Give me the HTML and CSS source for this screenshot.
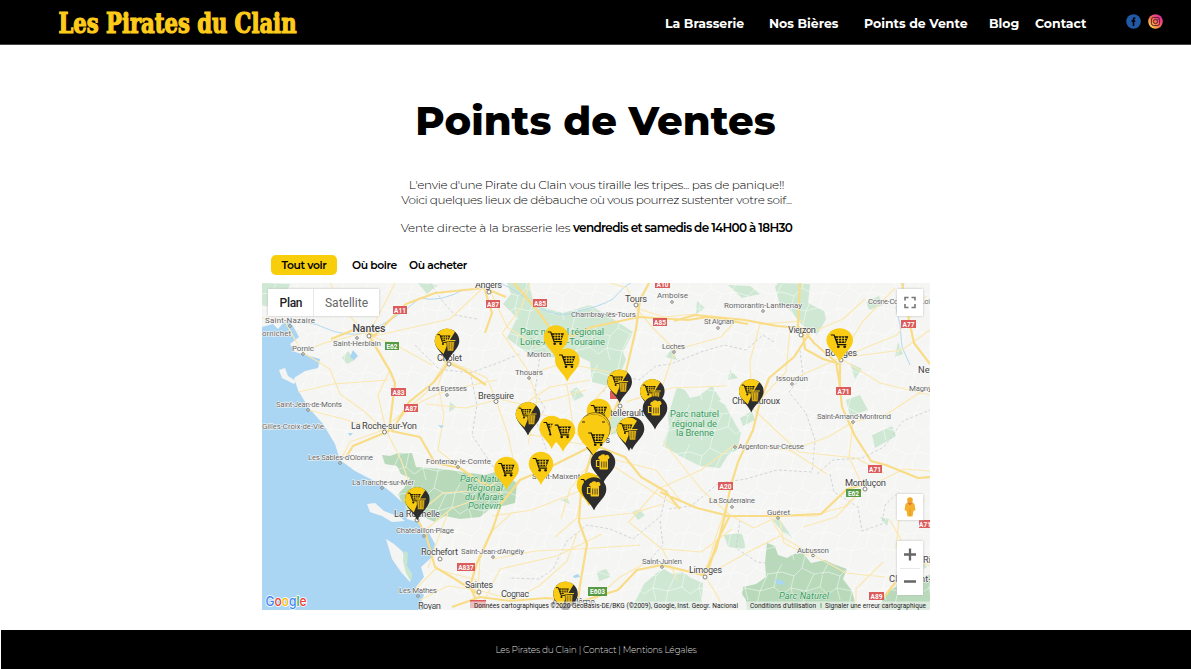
FILE: index.html
```html
<!DOCTYPE html>
<html lang="fr">
<head>
<meta charset="utf-8">
<title>Les Pirates du Clain – Points de Vente</title>
<link rel="stylesheet" href="styles.css">
</head>
<body>
<header class="header">
  <svg class="logo" width="242" height="34" viewBox="0 0 242 34"><text x="1.500" y="25.500" textLength="238" lengthAdjust="spacingAndGlyphs">Les Pirates du Clain</text></svg>
  <nav class="nav">
    <a>La Brasserie</a><a>Nos Bières</a><a>Points de Vente</a><a>Blog</a><a>Contact</a>
  </nav>
  <div class="social">
    <svg width="15" height="15" viewBox="0 0 15 15"><circle cx="7.500" cy="7.500" r="7.300" fill="#2059a6"/><path d="M6.700 12V8H5.500V6.300h1.200V5.200C6.700 3.800 7.400 3.100 9.300 3.300v1.500c-.8 0-1 .1-1 .7v.8h1L9.100 8h-.8v4z" fill="#000"/></svg>
    <svg width="15" height="15" viewBox="0 0 15 15"><defs><linearGradient id="ig" x1="0" y1="1" x2="1" y2="0"><stop offset=".1" stop-color="#ffdc50"/><stop offset=".45" stop-color="#f9754d"/><stop offset=".75" stop-color="#ed388d"/><stop offset="1" stop-color="#a536c2"/></linearGradient></defs><circle cx="7.500" cy="7.500" r="7.300" fill="url(#ig)"/><g fill="none" stroke="#341222" stroke-width=".8"><rect x="3.400" y="3.400" width="8.200" height="8.200" rx="2.300"/><circle cx="7.500" cy="7.500" r="2.100"/></g><circle cx="9.900" cy="5.100" r=".55" fill="#341222"/></svg>
  </div>
</header>
<main class="main">
  <h1 class="title">Points de Ventes</h1>
  <div class="intro">
    <p class="l1">L'envie d'une Pirate du Clain vous tiraille les tripes... pas de panique!!</p>
    <p class="l2">Voici quelques lieux de débauche où vous pourrez sustenter votre soif...</p>
    <p class="l3">Vente directe à la brasserie les <b>vendredis et samedis de 14H00 à 18H30</b></p>
  </div>
  <div class="filters"><span class="filter active">Tout voir</span><span class="filter f2">Où boire</span><span class="filter f3">Où acheter</span></div>
  <section class="map">
    <svg class="canvas" width="668" height="327" viewBox="262 283 668 327">
      <defs>
        <pattern id="veins" width="46" height="40" patternUnits="userSpaceOnUse"><path d="M0 12 12 16 20 8 32 14 46 12M12 16 9 28 0 34M20 8 22 0M9 28 24 31 32 14M24 31 22 40M24 31 38 27 46 34M38 27 41 13M41 13 46 4M9 28 12 40" fill="none" stroke="#fff" stroke-width=".8" opacity=".6"/></pattern>
        <path id="drop" d="M0 21C-3 13-12.300 8-12.300 0A12.300 12.300 0 0 1 12.300 0C12.300 8 3 13 0 21Z"/>
        <g id="cart"><path d="M-8.200-5.500h3l3.300 9.700h8" fill="none" stroke="#191704" stroke-width="1.200"/><path d="M-4.700-4.300H8L5.400 2.500H-2.400Z" fill="#191704"/><path d="M-3.400-2.200h10M-2.500.3h8.300M-1-4v6M1.800-4v6M4.500-4v6" stroke="#f8ca17" stroke-width=".9"/><circle cx="-1.300" cy="6.200" r="1.300" fill="#191704"/><circle cx="4.600" cy="6.200" r="1.300" fill="#191704"/></g>
        <g id="mug"><rect x="-4.500" y="-4" width="8.500" height="11" rx="1"/><path d="M-5.500-3.500a2.200 2.200 0 0 1 1.800-3.200 3.200 3.200 0 0 1 5.200-.3 2.300 2.300 0 0 1 3.200 3.500z"/><path d="M-2.300-1v6M0-1v6M2.200-1v6" stroke="#2e2b24" stroke-width=".8"/></g>
        <g id="pc"><use href="#drop" fill="#f9cb12"/><use href="#cart"/></g>
        <g id="pm"><use href="#drop" fill="#2d2d2d"/><path d="M-3.500-2h-3v6h3" fill="none" stroke="#f8ca17" stroke-width="1.200"/><use href="#mug" x="1" fill="#f8ca17"/></g>
        <g id="pb"><use href="#drop" fill="#2d2d2d"/><path d="M-3.500 13C-7 9-12.300 6-12.300 0A12.300 12.300 0 0 1 8-9.300L1 2Z" fill="#f9cb12"/><use href="#cart" transform="translate(-3 -2) scale(.8)"/><g transform="translate(3.500 4.500)"><path d="M-4-4h8l-1 9.500h-6z" fill="#d8ae18" stroke="#3c331a" stroke-width=".5"/><path d="M-5-5H5" stroke="#f8ca17" stroke-width="1"/><path d="M-1.300-3v7M1.300-3v7" stroke="#6b5717" stroke-width=".6"/></g></g>
      </defs>
      <rect x="262" y="283" width="668" height="327" fill="#f5f5f4"/>
      <g fill="#cfe8d4">
        <path d="M507 283h22l5 22 29 8 27-8 20 12 23 15-10 20 3 8-6 14-12 12-16-4-2-20-14-7-16 3-30-3-23-17 10-20-14-14 8-10z"/>
        <path d="m677 387 8 3 5 8 20-5 6 6 9 6 12 22 4 6-4 17-9 5-8 13-20-2-20-10-17-10 6-20-1-10z"/>
        <path d="m778 283 32 1-2 19 16 8 2 8-9 16-15-10-12-15-10-5-5-18z"/>
        <path d="m658 572 6-3 8 5 11-2 8 6 12 5-2 27h-71l8-14 6-12z"/>
        <path d="m262 283 28 1-5 12 12 8-20 6-15-5z"/>
        <path d="m700 395 12-9 9 14-17 4zM740 418l12-7 3 9-12 6zM846 400l14-5 8 15-18 6zM872 435l20-9 4 10-21 12zM724 535l18-2 4 16-18-2zM772 519l8 1 12 17-10-5zM570 391l7-4 7 9-10 5zM866 302l13-6 4 9-14 5zM850 363l12 6-7 10zM728 285l22 1 10 8-18 4zM697 301l8 7-9 6zM730 370l8 8-10 2zM597 572l9-3 5 8-12 4zM632 512l8-3 5 6-7 5zM342 358l6-7 7 9-8 4zM418 283l20 2-11 9zM450 402l6 5-7 5zM665 357l7-8 5 11zM880 517l9 2-2 7zM898 342l5 12-8 3zM914 560l8-3 5 10-8 5zM560 500l7-2 3 6zM610 414l18 4-5 13-12 4z"/>
      </g>
      <g fill="#b8dabb"><path d="m382 455 8 1 8-3 14 0 4 14 26 2 43 6 14-4 18 12-2 20-25 6-10 8-20 2-15-3-10 6-30-13-7-15 6-6 6-10-9-4-4-8-12-2z"/><path d="m767 543 8 3 3 9 9 3 7-4 9-1 8 10 14-3 8 4 14 5-4 10 9 12 5 19H747l-1-10-4-6 1-7 13-3 10-7-1-14z"/><path d="m877 610 10-18 12-7 8 4 23-15v36z"/></g>
      <path d="M262 283h668v327H262z" fill="url(#veins)"/>
      <path d="m262 327 11-3 5 5 8-9 7 6 6 11-9 7 5 8 11 3 14 4-2 9-13 3-11 7 4 12 10 17 15 17 12 20 5 16 15 11 27 14 10 8 13 12 2 14 10 3 12 11 6 11-3 13-11 10 3 10-8 10 8 8-3 7 5 14H262z" fill="#aad6f3"/>
      <g fill="#f4f5f3"><path d="m367 504 8-1 9 8 16 6 5 4-13 1-10-6-12-4z"/><path d="m386 539 8 5 9 8 3 13 6 9-2 8-9-10-9-13z"/><path d="m279 370 6-2 3 8 8 5-2 3-12-6z"/></g>
      <path d="M404 551l4 2-1 13 5 8-1 8-5-9-3-12z" fill="#c8e5cf"/>
      <path d="M288 323q22-3 37 5 20 9 40 5 30-13 55-35 20 5 45-9M500 283q18 8 36 23 25 14 42 5 21-4 35-12 12-14 18-16M904 283l-8 25 4 17 2 22 8 18" fill="none" stroke="#b3daf0" stroke-width="1"/>
      <g fill="none" stroke="#c9cbce" stroke-width=".8" stroke-dasharray="3 2">
        <path d="M430 283l14 20 11 12 22 4M415 345l24 24 31 4 25-9 25-10M470 372l7 33-5 30 12 18 17 25-6 12M540 354l-5 38 10 16-8 15 9 26M603 392l13-18 23 6 17-14 15-2 30-12 23-7 22 5 17-15 11 7M800 350l3 25-14 17 17 21 9 27-3 32-35-2-31 9-27 4-28 23-22 3M817 474l16-14 29-2 22-11 19-26 27-11M830 474l4 18 24 15 4 24 20-7 3-19 14-13M667 490l-6 26-28 23-23-10-23-4-20 16-14 28-14 10-30-1M660 521l3 24-18 20M740 520l-4 28 21 14 52 7 19 8"/>
      </g>
      <g fill="none" stroke="#fbe8b0" stroke-width="1.200" stroke-linejoin="round">
        <path d="M262 318l22 2 18 32 22-9 40-10M302 352l28 17 10 25 25 18 20 19M298 392l35-8 55-4M308 410l32 8 45 13M340 461l10-19 22-8 15-5M330 283l17 30 20 22 27 9 38 21M395 283l-10 20-17 32M370 337l80-18 36-34M386 430l-8-35 12-25-18-32M390 430l20-23 30-14 32-8 25-5M386 430l15 30 7 20M447 360l-21 33-33 28M447 360l40 18 8 20 30 7 29-6 32-9M447 360l-9 25 6 30-6 35 21 17M496 400l-30 8-40-4M496 400l12 35 6 28M416 515l27-22 40-3 34-20M422 533l30-25 41-14M428 568l12-35 8-20M415 590l20-21 42 11M420 600l28-14 30 4M478 590l2-31 13-29 18-16M478 590l35 10 26-14 28-25 10-28M493 559l42-8 45-2 60-4M530 283l-9 25-19 25 25 36 10 30-9 45M529 374l32-10 23 3 35 7M490 290l17 37 31 20M636 308l28 9 32-3 18 7M636 308l-9-20-17-5M636 308l17 20 22 22 46-13 17-19M675 350l-14 40-35 12M626 402l46-14 55-2M752 408l-2-47 10-37 43-3M752 408l34-36 4-43M752 408l47 44 57 6 28 15M734 445l56 5 37 24M734 445l-33 25-43 19-30 34M803 336l40-17 22-20M840 358l57-23 29-39M840 358l23-37 32-33M840 358l62-8 28-20M840 358l40 25 50 12M840 358l-54 24M853 422l34-8 43-28M853 422l-25 15-39 14M853 422l-4 35 13 28M862 490l-18 17-22 6M862 490l-26 27-33 10M876 483l28-14 26 2M730 515l-29-26-24-30-14-18M730 515l24 13 25-12 40 0M779 516l5 27 25 13M813 555l-31-18-14-23M813 555l33 18 39 4M732 529l-31 23-38-3M705 576l-30-7-29-6M705 576l10-37 13-37M705 576l47-26 28-14M705 576l13 21 5 13M646 563l-26 14-27 24M596 455l-26 34-9 30M596 455l48 31 36 22M596 455l60 15 24 30M594 446l35-28-10-16M594 446l-38-27-29-10M594 446l-5-40 20-22M582 490l-50 20-40 6M582 490l-5 28-22 19M579 519l54-6 30-9M630 523l33 27 15 31M594 446l-31-5-35-7M480 609l20-40 57-13 45-22M925 500l-25 10-4 38M890 520l20 36 20 10M883 562l-27 27 0 21M590 380l-40 7-30 20M567 385l6 41"/>
      </g>
      <g fill="none" stroke="#f9dc86" stroke-width="2.200" stroke-linejoin="round">
        <path d="M331 339l30-12 13 9 32-32 29-11 49-5 22 9M484 287l8 26-7 20M514 283l23 27 13 18 22 8 20-9 47-10 49 3 20-3 40 7M674 321l21-6 50 5 32 6 25 2 12 15 22 19 3 18 3 27 13 29 16 25 15 4 32 13 14-1M649 283l-9 17-4 29-7 30-10 41-22 47M369 336l21 35 5 12-6 48M392 431l17-29 25-20 15-20M389 431l-36 15-7 11M391 431l29 6 15 26 25 5 17 12 24 12M594 445l-44 22-30 13-19 24-8 24-16 35-7 23 9 21 13 20M594 445l-13 45-2 32 8 22-7 41-3 26M579 602l39-12 19-20 25-5 41 10 13-25 8-31 7-34 7-23 15-32 7-28 9-24 25-21 15-23M800 283l-2 43 7 15M802 328l3 21 18 10 17 5 0 26M660 492l37 16 32 8 49 0 43-2 26-25 16-4M730 515l-13 27-8 26M885 596l16-21 18-11M902 283l7 37 5 23 16 21M440 359l24 11 22 15M416 517l10 18 9 32 20 12 25 16M452 607l28-10 30 4 36-3 34 3M594 445l31 12 16 20 24 14 15 18"/>
      </g>
      <g fill="#a9d6f2"><path d="M775 579l8 2 3 4-9-1zM438 425l6 1-3 2zM573 576l5-2 2 3-6 1zM348 433l5 0-3 3zM353 350l5 6-4 4-4-3z"/></g>

      <g class="city big">
        <text x="475" y="288" textLength="27">Angers</text><text x="352.500" y="331.500" textLength="33" class="strong">Nantes</text><text x="625" y="302" textLength="22">Tours</text><text x="788" y="333" textLength="28">Vierzon</text><text x="825" y="356" textLength="32">Bourges</text><text x="732" y="404" textLength="48">Châteauroux</text><text x="351" y="429" textLength="66">La Roche-sur-Yon</text><text x="394" y="517" textLength="46">La Rochelle</text><text x="478" y="399" textLength="36">Bressuire</text><text x="437" y="361" textLength="25">Cholet</text><text x="594" y="416" textLength="50">Châtellerault</text><text x="582" y="443" textLength="28">Poitiers</text><text x="845" y="486" textLength="41">Montluçon</text><text x="689" y="573" textLength="33">Limoges</text><text x="421" y="555" textLength="37">Rochefort</text><text x="465" y="588" textLength="28">Saintes</text><text x="418" y="609" textLength="23">Royan</text><text x="501" y="597" textLength="28">Cognac</text><text x="918" y="373" textLength="29">Nevers</text><text x="889" y="582" textLength="75">Clermont-Ferrand</text><text x="552" y="605" textLength="43">Angoulême</text><text x="923" y="563">Riom</text>
      </g>
      <g class="city">
        <text x="265" y="323" textLength="50">Saint-Nazaire</text><text x="262" y="336" textLength="29">ornichet</text><text x="292" y="351" textLength="22">Pornic</text><text x="333" y="346" textLength="48">Saint-Herblain</text><text x="571" y="317" textLength="65">Chambray-lès-Tours</text><text x="657" y="298" textLength="31">Amboise</text><text x="662" y="349" textLength="23">Loches</text><text x="527" y="357" textLength="24">Morton</text><text x="515" y="375" textLength="28">Thouars</text><text x="724" y="308" textLength="78">Romorantin-Lanthenay</text><text x="704" y="324" textLength="30">St Aignan</text><text x="868" y="304" textLength="68">Cosne-Cours-sur-Loire</text><text x="776" y="381" textLength="32">Issoudun</text><text x="909" y="391" textLength="44">Magny-Cours</text><text x="817" y="419" textLength="74">Saint-Amand-Montrond</text><text x="738" y="449" textLength="66">Argenton-sur-Creuse</text><text x="709" y="503" textLength="46">La Souterraine</text><text x="767" y="515" textLength="23">Guéret</text><text x="797" y="553" textLength="32">Aubusson</text><text x="642" y="564" textLength="40">Saint-Junien</text><text x="276" y="407" textLength="66">Saint-Jean-de-Monts</text><text x="262" y="429" textLength="62">Gilles-Croix-de-Vie</text><text x="308" y="460" textLength="65">Les Sables-d'Olonne</text><text x="352" y="485" textLength="62">La Tranche-sur-Mer</text><text x="428" y="391" textLength="39">Les Epesses</text><text x="426" y="464" textLength="65">Fontenay-le-Comte</text><text x="532" y="479" textLength="73">Saint-Maixent-l'École</text><text x="396" y="533" textLength="58">Chatelaillon-Plage</text><text x="461" y="554" textLength="63">Saint-Jean-d'Angély</text><text x="399" y="593" textLength="38">Les Mathes</text>
      </g>
      <g class="towns"><circle cx="369" cy="336" r="2"/><circle cx="489" cy="292" r="2"/><circle cx="636" cy="305" r="2"/><circle cx="801" cy="335" r="2"/><circle cx="841" cy="360" r="2"/><circle cx="384.500" cy="432" r="2"/><circle cx="449" cy="364" r="2"/><circle cx="496" cy="401.500" r="2"/><circle cx="620" cy="406" r="2"/><circle cx="865" cy="489" r="2"/><circle cx="705" cy="577" r="2"/><circle cx="440" cy="559" r="2"/><circle cx="479" cy="592" r="2"/><circle cx="417" cy="520" r="2"/><circle cx="813" cy="555.500" r="1.300"/><circle cx="778" cy="518" r="1.300"/><circle cx="732" cy="507" r="1.300"/><circle cx="662" cy="567" r="1.300"/><circle cx="308" cy="410" r="1.300"/><circle cx="340" cy="463" r="1.300"/><circle cx="382" cy="488" r="1.300"/><circle cx="458" cy="467" r="1.300"/><circle cx="447" cy="395" r="1.300"/><circle cx="529" cy="378" r="1.300"/><circle cx="674" cy="352" r="1.300"/><circle cx="672" cy="302" r="1.300"/><circle cx="763" cy="311" r="1.300"/><circle cx="718" cy="328" r="1.300"/><circle cx="792" cy="384" r="1.300"/><circle cx="853" cy="422" r="1.300"/><circle cx="493" cy="557" r="1.300"/><circle cx="424" cy="536" r="1.300"/><circle cx="303" cy="354" r="1.300"/><circle cx="290" cy="326" r="1.300"/><circle cx="357" cy="338" r="1.300"/><circle cx="418" cy="596" r="1.300"/><circle cx="735" cy="447" r="1.300"/></g>
      <g class="road"><g fill="#dc5c5c"><path d="M393 306h14v8h-14zM486 300h14v8h-14zM533 299h14v8h-14zM655 281h15v7h-15zM653 318h14v8h-14zM901 320h15v8h-15zM836 387h15v8h-15zM391 388h15v8h-15zM404 404h14v8h-14zM610 391h12v8h-12zM868 465h14v8h-14zM718 482h15v8h-15zM457 563h18v8h-18zM470 600h16v8h-16zM869 592h15v8h-15zM919 520h15v8h-15z"/></g><path d="M385 342h14v8h-14zM846 489h15v8h-15zM588 587h19v9h-19z" fill="#569b44"/>
      <text x="400" y="312.500">A11</text><text x="493" y="306.500">A87</text><text x="540" y="305.500">A85</text><text x="662.500" y="287">A10</text><text x="660" y="324.500">A85</text><text x="908.500" y="326.500">A77</text><text x="843.500" y="393.500">A71</text><text x="398.500" y="394.500">A83</text><text x="411" y="410.500">A87</text><text x="875" y="471.500">A71</text><text x="725.500" y="488.500">A20</text><text x="466" y="569.500">A837</text><text x="876.500" y="598.500">A89</text><text x="925" y="526.500">A71</text><text x="392" y="348.500">E62</text><text x="853.500" y="495.500">E62</text><text x="597.500" y="594">E603</text></g>
      <g class="park"><text x="520" y="335" textLength="84">Parc naturel régional</text><text x="520" y="344.500" textLength="85">Loire-Anjou-Touraine</text><text x="670" y="417" textLength="49">Parc naturel</text><text x="672" y="426.500" textLength="45">régional de</text><text x="676" y="435.500" textLength="38">la Brenne</text><g class="slant"><text x="460" y="482" textLength="49">Parc Naturel</text><text x="467" y="491" textLength="36">Régional</text><text x="465" y="500" textLength="39">du Marais</text><text x="468" y="509" textLength="33">Poitevin</text><text x="779" y="599" textLength="50">Parc Naturel</text></g></g>

      <g>
        <use href="#pb" x="447" y="341"/><use href="#pc" x="556" y="337.500"/><use href="#pc" x="567.300" y="360.500"/><use href="#pb" x="619.700" y="382"/><use href="#pb" x="652.300" y="391.500"/><use href="#pm" x="655" y="408.500"/><use href="#pb" x="528" y="414.500"/><use href="#pc" x="551.700" y="428"/><use href="#pc" x="563" y="430.700"/>
        <use href="#pc" x="599" y="411"/>
        <path d="M586 447l8 10 4 2-4-12z" fill="#2d2d2d"/>
        <g fill="#f9cb12"><circle cx="595" cy="428" r="15.500" stroke="#3a3418" stroke-width=".6"/><circle cx="594" cy="430" r="15.500" stroke="#3a3418" stroke-width=".6"/><path d="M593.700 457c-2-9-16.200-15-16.200-27a16 15.500 0 0 1 32 0c0 11-12.300 17-15.800 27z"/></g>
        <path d="M582 422h3M602 422h3" stroke="#222" stroke-width="1"/><use href="#cart" x="596.500" y="438.500"/>
        <use href="#drop" x="632" y="429" fill="#2d2d2d"/><use href="#pb" x="629" y="430"/>
        <use href="#pc" x="506.500" y="469"/><use href="#pc" x="541" y="464"/><use href="#pm" x="603" y="462.500"/><use href="#pc" x="589" y="485"/><use href="#pm" x="594" y="489.500"/><use href="#pb" x="751.300" y="391.500"/><use href="#pc" transform="translate(839.700 340.500) scale(1.080 1)"/><use href="#pb" x="417.300" y="499.500"/><use href="#pb" x="565.500" y="594"/>
      </g>
      <rect x="470" y="601.500" width="460" height="8.500" fill="#f5f5f5" opacity=".65"/>
      <g class="legal"><text x="474" y="608" textLength="264">Données cartographiques ©2020 GeoBasis-DE/BKG (©2009), Google, Inst. Geogr. Nacional</text><text x="750" y="608" textLength="66">Conditions d'utilisation</text><path d="M821 603v5" stroke="#65a56c"/><text x="825" y="608" textLength="101">Signaler une erreur cartographique</text></g>
      <text class="google" x="265.500" y="606" textLength="41" lengthAdjust="spacingAndGlyphs"><tspan fill="#4285f4">G</tspan><tspan fill="#ea4335">o</tspan><tspan fill="#fbbc05">o</tspan><tspan fill="#4285f4">g</tspan><tspan fill="#34a853">l</tspan><tspan fill="#ea4335">e</tspan></text>
      <g class="controls"><path d="M268 289h111v27H268zM897 289h26v27h-26zM897 494h26v26h-26zM897 541h26v54h-26z"/></g>
      <path d="M313.500 289v27M900 568.500h20" stroke="#e8e8e8"/>
      <text class="mode" x="279.500" y="306.500" textLength="23" fill="#222" font-weight="500">Plan</text><text class="mode" x="325" y="306.500" textLength="43" fill="#666">Satellite</text>
      <path d="M905 300.500V297.500h3.500M911.500 297.500h3.500v3M915 304v3.500h-3.500M908.500 307.500H905V304" fill="none" stroke="#777" stroke-width="1.600"/>
      <path d="M904 554.500h12M910 548.500v12M904 581.500h12" fill="none" stroke="#666" stroke-width="2.300"/>
      <circle cx="910" cy="500" r="2.800" fill="#f3a72a"/><path d="M905.500 504l2-1.500h5l2 1.500 1 6-2 1-1 5.500h-5l-1-5.500-2-1z" fill="#f5b12d"/><path d="M907 502.500l3 3 3-3" fill="#e77532"/><path d="M910 509v7" stroke="#d48b20" stroke-width=".7"/>
    </svg>
  </section>
</main>
<footer class="footer"><span>Les Pirates du Clain | Contact | Mentions Légales</span></footer>
</body>
</html>
```
FILE: styles.css
```css
* { box-sizing: border-box; }
body { margin: 0; width: 1191px; height: 669px; overflow: hidden; background: #fff; font-family: Montserrat, Inter, sans-serif; color: #000; display: flex; flex-direction: column; }
.header { height: 45px; background: #000; border-bottom: 1px solid #444; display: flex; align-items: flex-start; padding: 7px 0 0 57px; }
.logo { display: block; overflow: visible; }
.logo text { font-family: "DejaVu Serif Condensed", "DejaVu Serif", serif; font-size: 28.500px; font-weight: bold; font-stretch: condensed; fill: #ffcb1b; stroke: #ffcb1b; stroke-width: 1.200px; }
.nav { margin-left: 366px; padding-top: 9px; display: grid; grid-template-columns: 104px 95px 125px 46px 91px; color: #fff; font-size: 12.500px; font-weight: 700; line-height: 16px; white-space: nowrap; }
.social { display: flex; gap: 7px; padding-top: 7px; }
.main { flex: 1; display: flex; flex-direction: column; }
.title { margin: 48px 0 0; text-align: center; font-size: 40px; line-height: 56px; font-weight: 800; letter-spacing: 0.050px; }
.intro { margin-top: 29px; padding-left: 2px; text-align: center; font-size: 12px; line-height: 14.500px; font-weight: 300; }
.intro p { margin: 0; }
.intro .l1 { letter-spacing: -.34px; }
.intro .l2 { letter-spacing: -.4px; }
.intro .l3 { margin-top: 14px; letter-spacing: -.25px; }
.intro b { font-weight: 600; letter-spacing: -.66px; }
.filters { display: flex; height: 20px; margin: 19px 0 0 271px; font-size: 10.800px; font-weight: 600; line-height: 21px; letter-spacing: -.4px; }
.filter.active { width: 66px; background: #f8ce0b; border-radius: 5px; text-align: center; }
.f2 { margin-left: 15px; width: 57px; }
.map { margin: 8px 0 0 262px; height: 327px; }
.canvas { display: block; font-family: Roboto, sans-serif; }
.road text { font-size: 6.500px; font-weight: 700; fill: #fff; text-anchor: middle; }
.city { font-size: 8px; fill: #666; stroke: #f8f8f8; stroke-width: 1.200px; paint-order: stroke; }
.city.big { font-size: 9.300px; fill: #444; }
.city .strong { font-size: 10.500px; font-weight: 500; }
.towns { fill: #fff; stroke: #666; stroke-width: .8px; }
.park { font-size: 9.300px; fill: #349a5c; stroke: #e5f2e7; stroke-width: .8px; paint-order: stroke; }
.slant { font-style: italic; }
.legal { font-size: 6.500px; fill: #222; }
.google { font-family: Inter, sans-serif; font-size: 13.500px; font-weight: 500; stroke: #fff; stroke-width: 1.500px; paint-order: stroke; }
.controls { fill: #fff; filter: drop-shadow(0 0 1px #bbb); }
.mode { font-size: 12px; }
.footer { height: 39px; margin-left: 1px; background: #000; color: #ddd; font-size: 9px; font-weight: 300; line-height: 40px; letter-spacing: -.27px; text-align: center; }
```
